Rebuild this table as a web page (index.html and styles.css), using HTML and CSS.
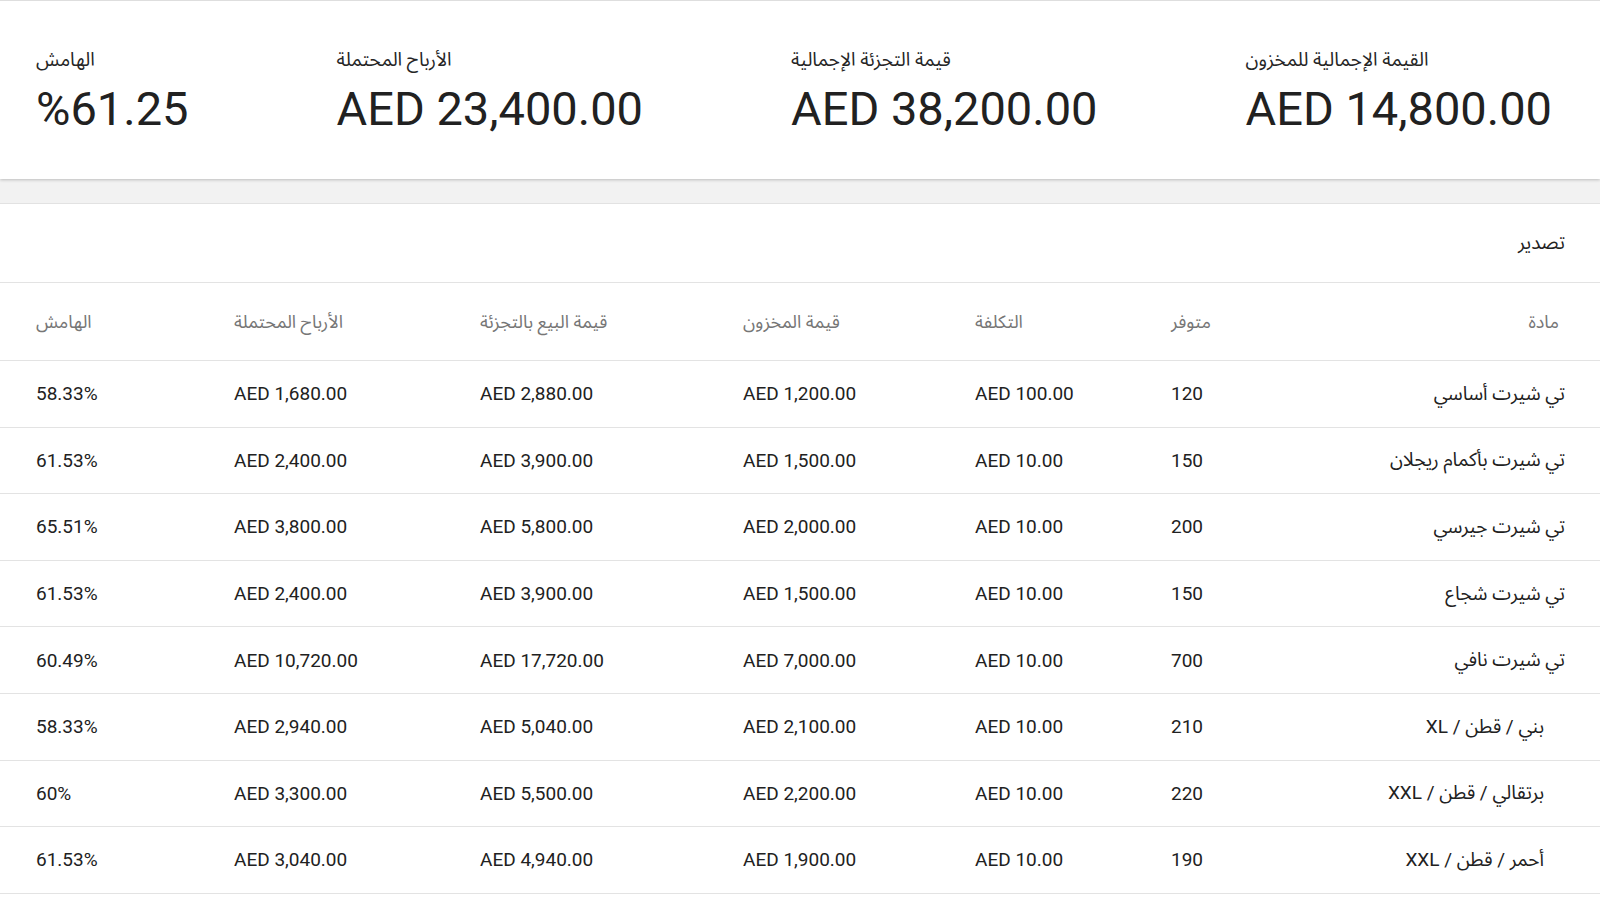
FILE: index.html
```html
<!DOCTYPE html>
<html lang="ar" dir="rtl">
<head>
<meta charset="utf-8">
<title>تقرير المخزون</title>
<link rel="stylesheet" href="styles.css">
</head>
<body>
<section class="stats">
  <div class="stat">
    <div class="stat-label">القيمة الإجمالية للمخزون</div>
    <div class="stat-value">AED 14,800.00</div>
  </div>
  <div class="stat">
    <div class="stat-label">قيمة التجزئة الإجمالية</div>
    <div class="stat-value">AED 38,200.00</div>
  </div>
  <div class="stat">
    <div class="stat-label">الأرباح المحتملة</div>
    <div class="stat-value">AED 23,400.00</div>
  </div>
  <div class="stat">
    <div class="stat-label">الهامش</div>
    <div class="stat-value"><span class="ltr">%61.25</span></div>
  </div>
</section>

<section class="table-card">
  <div class="card-title">تصدير</div>
  <table class="report">
    <colgroup>
      <col class="c-item"><col class="c-avail"><col class="c-cost"><col class="c-inv"><col class="c-retail"><col class="c-profit"><col class="c-margin">
    </colgroup>
    <thead>
      <tr>
        <th class="item">مادة</th>
        <th class="num">متوفر</th>
        <th class="num">التكلفة</th>
        <th class="num">قيمة المخزون</th>
        <th class="num">قيمة البيع بالتجزئة</th>
        <th class="num">الأرباح المحتملة</th>
        <th class="num last">الهامش</th>
      </tr>
    </thead>
    <tbody>
      <tr>
        <td class="item">تي شيرت أساسي</td>
        <td class="num">120</td>
        <td class="num">AED 100.00</td>
        <td class="num">AED 1,200.00</td>
        <td class="num">AED 2,880.00</td>
        <td class="num">AED 1,680.00</td>
        <td class="num last">58.33%</td>
      </tr>
      <tr>
        <td class="item">تي شيرت بأكمام ريجلان</td>
        <td class="num">150</td>
        <td class="num">AED 10.00</td>
        <td class="num">AED 1,500.00</td>
        <td class="num">AED 3,900.00</td>
        <td class="num">AED 2,400.00</td>
        <td class="num last">61.53%</td>
      </tr>
      <tr>
        <td class="item">تي شيرت جيرسي</td>
        <td class="num">200</td>
        <td class="num">AED 10.00</td>
        <td class="num">AED 2,000.00</td>
        <td class="num">AED 5,800.00</td>
        <td class="num">AED 3,800.00</td>
        <td class="num last">65.51%</td>
      </tr>
      <tr>
        <td class="item">تي شيرت شجاع</td>
        <td class="num">150</td>
        <td class="num">AED 10.00</td>
        <td class="num">AED 1,500.00</td>
        <td class="num">AED 3,900.00</td>
        <td class="num">AED 2,400.00</td>
        <td class="num last">61.53%</td>
      </tr>
      <tr>
        <td class="item">تي شيرت نافي</td>
        <td class="num">700</td>
        <td class="num">AED 10.00</td>
        <td class="num">AED 7,000.00</td>
        <td class="num">AED 17,720.00</td>
        <td class="num">AED 10,720.00</td>
        <td class="num last">60.49%</td>
      </tr>
      <tr>
        <td class="item variant">بني / قطن / XL</td>
        <td class="num">210</td>
        <td class="num">AED 10.00</td>
        <td class="num">AED 2,100.00</td>
        <td class="num">AED 5,040.00</td>
        <td class="num">AED 2,940.00</td>
        <td class="num last">58.33%</td>
      </tr>
      <tr>
        <td class="item variant">برتقالي / قطن / XXL</td>
        <td class="num">220</td>
        <td class="num">AED 10.00</td>
        <td class="num">AED 2,200.00</td>
        <td class="num">AED 5,500.00</td>
        <td class="num">AED 3,300.00</td>
        <td class="num last">60%</td>
      </tr>
      <tr>
        <td class="item variant">أحمر / قطن / XXL</td>
        <td class="num">190</td>
        <td class="num">AED 10.00</td>
        <td class="num">AED 1,900.00</td>
        <td class="num">AED 4,940.00</td>
        <td class="num">AED 3,040.00</td>
        <td class="num last">61.53%</td>
      </tr>
    </tbody>
  </table>
</section>
</body>
</html>
```

FILE: styles.css
```css
* { box-sizing: border-box; }

html, body {
  margin: 0;
  padding: 0;
}

body {
  background: #fff;
  font-family: Roboto, "Noto Sans Arabic", "Noto Sans", "DejaVu Sans", sans-serif;
  color: #212121;
  direction: rtl;
  overflow: hidden;
  height: 900px;
}

.ltr {
  direction: ltr;
  unicode-bidi: isolate;
}

/* ---------- stats card ---------- */
.stats {
  height: 179px;
  background: #fff;
  border-top: 1px solid #dedede;
  box-shadow: 0 1px 3px rgba(0, 0, 0, 0.22);
  display: flex;
  justify-content: space-between;
  align-items: center;
  padding: 0 48px 0 36px;
  position: relative;
}

.stat {
  text-align: left;
  padding-top: 4px;
}

.stat-label {
  font-size: 19px;
  line-height: 24px;
  color: #262626;
}

.stat-value {
  font-size: 47px;
  line-height: 54px;
  margin-top: 10px;
  color: #212121;
}

/* ---------- table card ---------- */
.table-card {
  border-top: 24px solid #f2f2f2;
  background: #fff;
}

.card-title {
  height: 80px;
  display: flex;
  align-items: center;
  padding-right: 35px;
  font-size: 19px;
  color: #222;
  border-top: 1px solid #e2e2e2;
  border-bottom: 1px solid #e3e3e3;
}

.report {
  width: 1600px;
  table-layout: fixed;
  border-collapse: separate;
  border-spacing: 0;
}

.c-item { width: 300px; }
.c-avail { width: 145px; }
.c-cost { width: 196px; }
.c-inv { width: 232px; }
.c-retail { width: 263px; }
.c-profit { width: 246px; }
.c-margin { width: 218px; }

.report th,
.report td {
  padding: 0;
  border-bottom: 1px solid #e3e3e3;
  white-space: nowrap;
  vertical-align: middle;
}

.report th {
  height: 78px;
  font-weight: 400;
  font-size: 18px;
  color: #767676;
}

.report td {
  height: 66.6px;
  font-size: 19px;
  color: #212121;
}

.report .num {
  text-align: left;
  padding-left: 16px;
}

.report .num.last {
  padding-left: 36px;
}

.report .item {
  text-align: right;
  padding-right: 35px;
}

.report th.item {
  padding-right: 41px;
}

.report td.variant {
  padding-right: 56px;
}
```
